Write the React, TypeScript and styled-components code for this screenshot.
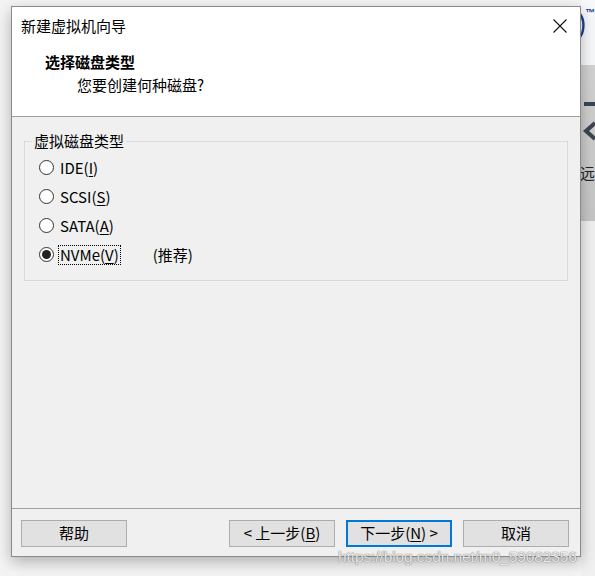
import React from 'react';
import styled, { createGlobalStyle } from 'styled-components';

const FONT = `"Noto Sans CJK SC", "Microsoft YaHei", "Liberation Sans", sans-serif`;

const GlobalStyle = createGlobalStyle`
  html, body {
    margin: 0;
    padding: 0;
    background: #f4f4f4;
  }
  body {
    font-family: ${FONT};
    color: #000;
  }
`;

const Page = styled.div`
  position: relative;
  width: 595px;
  height: 576px;
  display: flex;
  overflow: hidden;
`;

const DialogArea = styled.div`
  width: 581px;
  flex: none;
  padding: 6px 0 0 11px;
  box-sizing: border-box;
`;

const Dialog = styled.div`
  width: 570px;
  height: 551px;
  box-sizing: border-box;
  border: 1px solid #8a8a8a;
  background: #f0f0f0;
  display: flex;
  flex-direction: column;
  box-shadow: 0 5px 14px rgba(0, 0, 0, 0.28);
  position: relative;
  z-index: 1;
`;

const TitleBar = styled.div`
  height: 37px;
  flex: none;
  background: #fff;
  display: flex;
  align-items: center;
  justify-content: space-between;
  padding: 0 12px 0 9px;
  font-size: 15px;
  line-height: 20px;
`;

const CloseButton = styled.div`
  width: 16px;
  height: 16px;
  display: flex;
  align-items: center;
  justify-content: center;

  svg {
    stroke: #111;
    stroke-width: 1.1;
  }
`;

const Header = styled.div`
  height: 73px;
  flex: none;
  box-sizing: border-box;
  background: #fff;
  border-bottom: 1px solid #a0a0a0;
  padding-top: 8px;
`;

const HeaderTitle = styled.div`
  margin-left: 33px;
  font-size: 15px;
  line-height: 20px;
  font-weight: bold;
`;

const HeaderSub = styled.div`
  margin: 3px 0 0 65px;
  font-size: 15px;
  line-height: 20px;
`;

const Body = styled.div`
  flex: 1;
  padding-top: 14px;
`;

const GroupBox = styled.fieldset`
  margin: 0 12px;
  padding: 0 0 0 7px;
  border: 1px solid #d9d9d9;
  min-width: 0;
`;

const GroupLegend = styled.legend`
  padding: 0 2px;
  font-size: 15px;
  line-height: 20px;
  color: #000;
`;

const Options = styled.div`
  display: flex;
  flex-direction: column;
  padding: 2px 0 11px 7px;
`;

const OptionRow = styled.label`
  height: 29px;
  display: flex;
  align-items: center;
  font-size: 15px;
  line-height: 20px;
`;

const RadioCircle = styled.span<{ $checked?: boolean }>`
  width: 15px;
  height: 15px;
  box-sizing: border-box;
  border: 1px solid #333;
  border-radius: 50%;
  background: #fff;
  flex: none;
  display: flex;
  align-items: center;
  justify-content: center;
  margin-right: 5px;

  &::after {
    content: '';
    display: ${(p) => (p.$checked ? 'block' : 'none')};
    width: 9px;
    height: 9px;
    border-radius: 50%;
    background: #222;
  }
`;

const OptionText = styled.span<{ $focused?: boolean }>`
  padding: 0 1px;
  outline: ${(p) => (p.$focused ? '1px dotted #000' : 'none')};
  line-height: 18px;
`;

const Recommend = styled.span`
  margin-left: 33px;
`;

const Key = styled.span`
  text-decoration: underline;
  text-underline-offset: 2px;
`;

const Footer = styled.div`
  height: 48px;
  flex: none;
  box-sizing: border-box;
  border-top: 1px solid #a0a0a0;
  display: flex;
  align-items: flex-start;
  padding: 11px 11px 0 9px;
`;

const Spacer = styled.div`
  flex: 1;
`;

const Button = styled.div<{ $primary?: boolean }>`
  width: 106px;
  height: 27px;
  box-sizing: border-box;
  border: ${(p) => (p.$primary ? '2px solid #0078d7' : '1px solid #adadad')};
  background: #e1e1e1;
  display: flex;
  align-items: center;
  justify-content: center;
  padding-bottom: 2px;
  font-size: 15px;
  line-height: 20px;
  color: #000;
  white-space: pre;
  & + & {
    margin-left: 11px;
  }
`;

const BackStrip = styled.div`
  flex: 1;
  display: flex;
  flex-direction: column;
  overflow: hidden;
`;

const BackTop = styled.div`
  height: 65px;
  background: #f7f8fa;

  svg {
    display: block;
  }
`;

const BackBand = styled.div`
  height: 156px;
  background: linear-gradient(#d2d2d2, #c6c6c6);
  display: flex;
  flex-direction: column;

  svg {
    display: block;
    margin-top: 34px;
  }
`;

const BackText = styled.div`
  margin-top: 16px;
  margin-left: -1px;
  font-size: 15px;
  line-height: 20px;
  color: #222;
  white-space: nowrap;
`;

const BackRest = styled.div`
  flex: 1;
  background: #f0f0f0;
`;

const Watermark = styled.div`
  position: absolute;
  left: 338px;
  top: 547px;
  z-index: 2;
  font-family: "Liberation Sans", Arial, sans-serif;
  font-size: 15.5px;
  line-height: 20px;
  color: rgba(255, 255, 255, 0.85);
  text-shadow: 0 0 1px rgba(90, 90, 90, 0.7), 0 0 1px rgba(90, 90, 90, 0.7);
  white-space: nowrap;
  letter-spacing: -0.1px;
`;

const options: { label: string; key: string; checked?: boolean }[] = [
  { label: 'IDE', key: 'I' },
  { label: 'SCSI', key: 'S' },
  { label: 'SATA', key: 'A' },
  { label: 'NVMe', key: 'V', checked: true },
];

export default function App() {
  return (
    <>
      <GlobalStyle />
      <Page>
        <DialogArea>
          <Dialog>
            <TitleBar>
              <span>新建虚拟机向导</span>
              <CloseButton>
                <svg width="14" height="14" viewBox="0 0 14 14" fill="none">
                  <path d="M0.5 0.5 L13.5 13.5 M13.5 0.5 L0.5 13.5" />
                </svg>
              </CloseButton>
            </TitleBar>
            <Header>
              <HeaderTitle>选择磁盘类型</HeaderTitle>
              <HeaderSub>您要创建何种磁盘?</HeaderSub>
            </Header>
            <Body>
              <GroupBox>
                <GroupLegend>虚拟磁盘类型</GroupLegend>
                <Options>
                  {options.map((o) => (
                    <OptionRow key={o.key}>
                      <RadioCircle $checked={o.checked} />
                      <OptionText $focused={o.checked}>
                        {o.label}(<Key>{o.key}</Key>)
                      </OptionText>
                      {o.checked && <Recommend>(推荐)</Recommend>}
                    </OptionRow>
                  ))}
                </Options>
              </GroupBox>
            </Body>
            <Footer>
              <Button>帮助</Button>
              <Spacer />
              <Button>
                {'< 上一步('}<Key>B</Key>)
              </Button>
              <Button $primary>
                下一步(<Key>N</Key>){' >'}
              </Button>
              <Button>取消</Button>
            </Footer>
          </Dialog>
        </DialogArea>
        <BackStrip>
          <BackTop>
            <svg width="14" height="40" viewBox="0 0 14 40">
              <path
                d="M-1 14 C2 18 3 24 2 30 C1.5 33 0.5 35 -1 37"
                stroke="#1f3f8f"
                strokeWidth="2.4"
                fill="none"
              />
              <text x="4" y="16" fontSize="10" fontWeight="bold" fill="#1f3f8f" fontFamily="Liberation Sans, sans-serif">
                ™
              </text>
            </svg>
          </BackTop>
          <BackBand>
            <svg width="14" height="48" viewBox="0 0 14 48">
              <rect x="3" y="3" width="11" height="4" fill="#3b4652" />
              <path d="M14 24 L5 32 L14 40" stroke="#3b4652" strokeWidth="4" fill="none" />
            </svg>
            <BackText>远</BackText>
          </BackBand>
          <BackRest />
        </BackStrip>
        <Watermark>https://blog.csdn.net/m0_59082356</Watermark>
      </Page>
    </>
  );
}
